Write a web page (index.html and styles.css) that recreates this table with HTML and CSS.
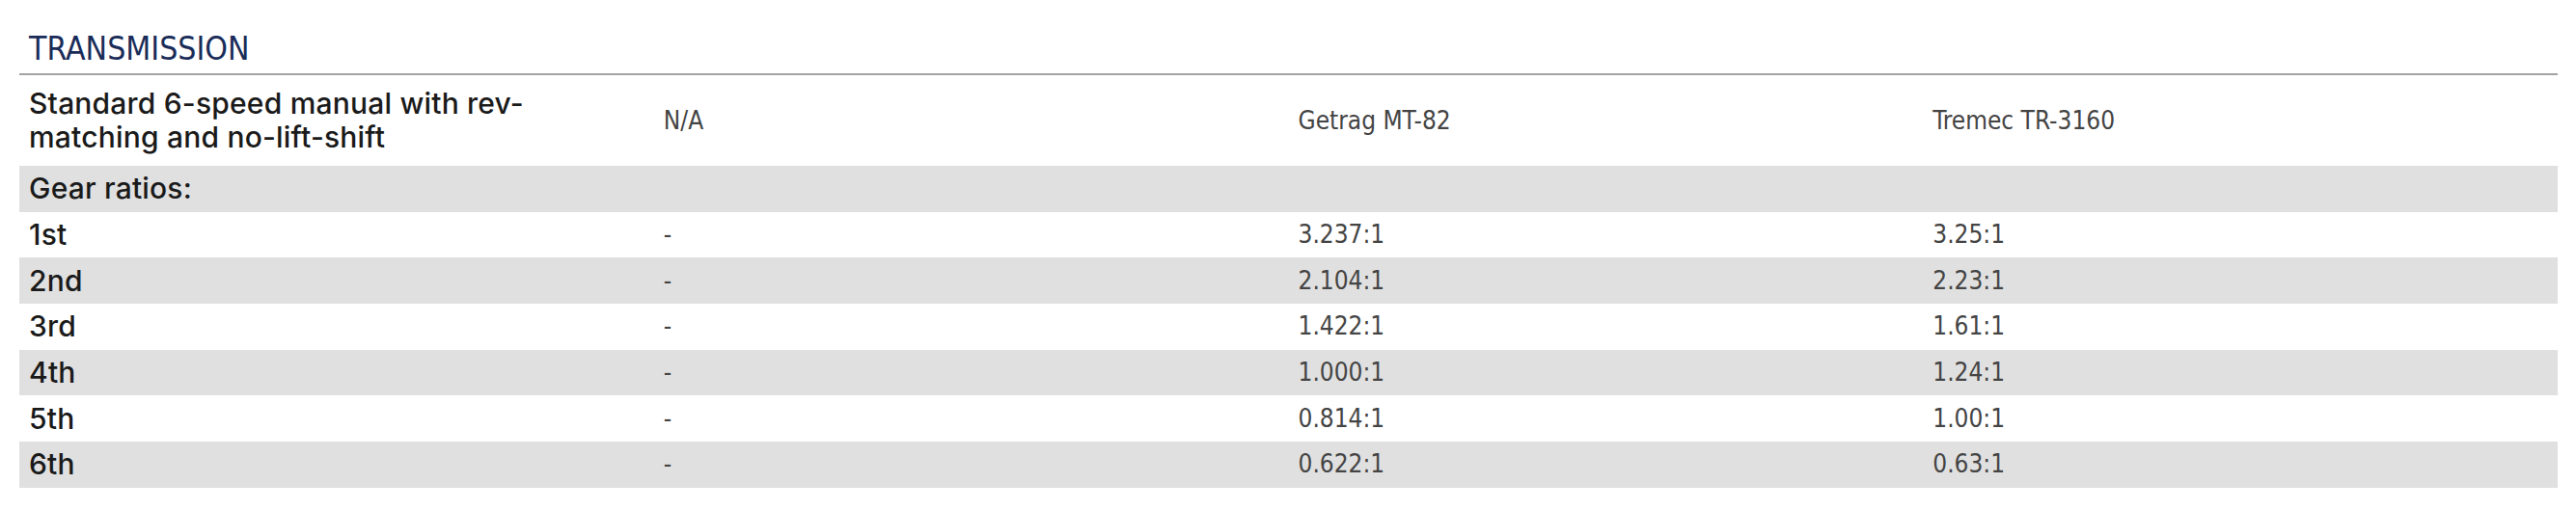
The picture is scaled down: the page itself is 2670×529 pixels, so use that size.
FILE: index.html
```html
<!DOCTYPE html>
<html lang="en">
<head>
<meta charset="utf-8">
<title>Transmission</title>
<link rel="stylesheet" href="styles.css">
</head>
<body>
<section class="spec">
  <h2 class="spec-title">TRANSMISSION</h2>
  <table class="spec-table">
    <tbody>
      <tr class="row row-tall">
        <td class="label">Standard 6-speed manual with rev-matching and no-lift-shift</td>
        <td class="value">N/A</td>
        <td class="value">Getrag MT-82</td>
        <td class="value">Tremec TR-3160</td>
      </tr>
      <tr class="row shaded">
        <td class="label">Gear ratios:</td>
        <td class="value"></td>
        <td class="value"></td>
        <td class="value"></td>
      </tr>
      <tr class="row">
        <td class="label">1st</td>
        <td class="value">-</td>
        <td class="value">3.237:1</td>
        <td class="value">3.25:1</td>
      </tr>
      <tr class="row shaded">
        <td class="label">2nd</td>
        <td class="value">-</td>
        <td class="value">2.104:1</td>
        <td class="value">2.23:1</td>
      </tr>
      <tr class="row">
        <td class="label">3rd</td>
        <td class="value">-</td>
        <td class="value">1.422:1</td>
        <td class="value">1.61:1</td>
      </tr>
      <tr class="row shaded">
        <td class="label">4th</td>
        <td class="value">-</td>
        <td class="value">1.000:1</td>
        <td class="value">1.24:1</td>
      </tr>
      <tr class="row">
        <td class="label">5th</td>
        <td class="value">-</td>
        <td class="value">0.814:1</td>
        <td class="value">1.00:1</td>
      </tr>
      <tr class="row shaded">
        <td class="label">6th</td>
        <td class="value">-</td>
        <td class="value">0.622:1</td>
        <td class="value">0.63:1</td>
      </tr>
    </tbody>
  </table>
</section>
</body>
</html>
```

FILE: styles.css
```css
html, body {
  margin: 0;
  padding: 0;
  background: #ffffff;
}

.spec {
  padding: 31px 19px 0 20px;
}

.spec-title {
  margin: 0;
  padding: 0 0 5px 10px;
  font-family: "DejaVu Sans Condensed", "Liberation Sans Narrow", "DejaVu Sans", sans-serif;
  font-stretch: condensed;
  font-weight: normal;
  font-size: 33.5px;
  line-height: 40px;
  color: #1a2c58;
  border-bottom: 2px solid #a3a3a3;
}

.spec-table {
  width: 100%;
  table-layout: fixed;
  border-collapse: collapse;
  border-spacing: 0;
}

.row td {
  padding: 6.35px 10px;
  line-height: 35px;
  vertical-align: middle;
}

.row-tall td {
  padding-top: 12px;
  padding-bottom: 12px;
}

.shaded {
  background: #e0e0e0;
}

.label {
  font-family: "Inter", "Noto Sans", sans-serif;
  font-size: 30px;
  font-weight: 500;
  letter-spacing: 0.2px;
  color: #1a1a1a;
}

.value {
  font-family: "DejaVu Sans Condensed", "Liberation Sans Narrow", "DejaVu Sans", sans-serif;
  font-stretch: condensed;
  font-size: 26px;
  color: #444444;
}
```
